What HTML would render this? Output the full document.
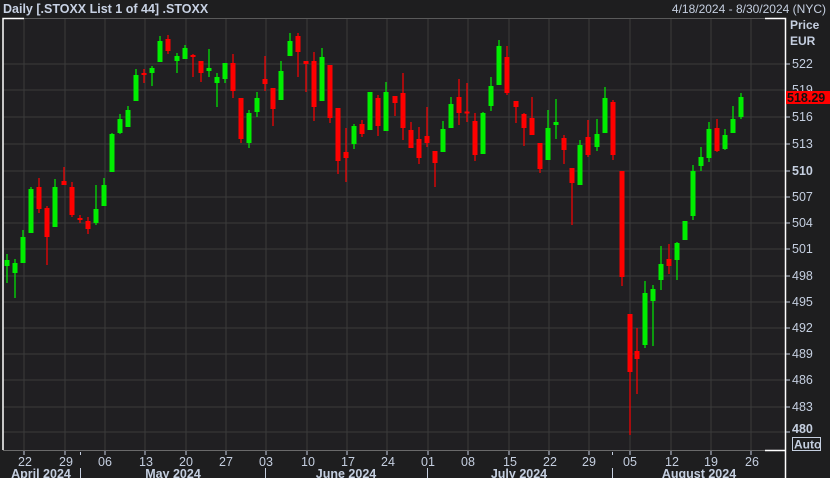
<!DOCTYPE html><html><head><style>
html,body{margin:0;padding:0;background:#1e1e1f;width:830px;height:478px;overflow:hidden}
svg{display:block}
text{font-family:"Liberation Sans",sans-serif;fill:#c5cfe0}
.g{fill:#00ee00;stroke:#00ee00}.r{fill:#ff0000;stroke:#ff0000}
line.g,line.r{stroke-width:1.2}
rect.g,rect.r{stroke-width:0}
.gr{stroke:#3b3b3b;stroke-width:1}
</style></head><body>
<svg width="830" height="478" viewBox="0 0 830 478">
<rect x="0" y="0" width="830" height="478" fill="#1e1e1f"/>
<rect x="3" y="19" width="782" height="431" fill="#201f22"/>
<g class="gr">
<line x1="3" x2="785" y1="64" y2="64"/><line x1="3" x2="785" y1="90" y2="90"/><line x1="3" x2="785" y1="117" y2="117"/><line x1="3" x2="785" y1="144" y2="144"/><line x1="3" x2="785" y1="171" y2="171"/><line x1="3" x2="785" y1="197" y2="197"/><line x1="3" x2="785" y1="223" y2="223"/><line x1="3" x2="785" y1="249" y2="249"/><line x1="3" x2="785" y1="276" y2="276"/><line x1="3" x2="785" y1="302" y2="302"/><line x1="3" x2="785" y1="328" y2="328"/><line x1="3" x2="785" y1="354" y2="354"/><line x1="3" x2="785" y1="380" y2="380"/><line x1="3" x2="785" y1="407" y2="407"/><line x1="3" x2="785" y1="432" y2="432"/>
<line y1="19" y2="450" x1="24" x2="24"/><line y1="19" y2="450" x1="65" x2="65"/><line y1="19" y2="450" x1="105" x2="105"/><line y1="19" y2="450" x1="145" x2="145"/><line y1="19" y2="450" x1="186" x2="186"/><line y1="19" y2="450" x1="226" x2="226"/><line y1="19" y2="450" x1="266" x2="266"/><line y1="19" y2="450" x1="307" x2="307"/><line y1="19" y2="450" x1="347" x2="347"/><line y1="19" y2="450" x1="387" x2="387"/><line y1="19" y2="450" x1="428" x2="428"/><line y1="19" y2="450" x1="468" x2="468"/><line y1="19" y2="450" x1="509" x2="509"/><line y1="19" y2="450" x1="549" x2="549"/><line y1="19" y2="450" x1="589" x2="589"/><line y1="19" y2="450" x1="630" x2="630"/><line y1="19" y2="450" x1="671" x2="671"/><line y1="19" y2="450" x1="711" x2="711"/><line y1="19" y2="450" x1="751" x2="751"/>
</g>
<polyline points="3,450 3,18.5 24,18.5" fill="none" stroke="#fff" stroke-width="1.5"/>
<line x1="24" x2="765" y1="18.5" y2="18.5" stroke="#5a5a5a"/>
<polyline points="765,18.5 785.5,18.5 785.5,478" fill="none" stroke="#fff" stroke-width="1.5"/>
<line x1="3" x2="765" y1="450.5" y2="450.5" stroke="#6a6a6a"/>
<line x1="765" x2="785" y1="450.5" y2="450.5" stroke="#fff" stroke-width="1.5"/>
<g>
<line class="g" x1="7" x2="7" y1="254" y2="283"/><rect class="g" x="4.5" y="260" width="5" height="6"/>
<line class="g" x1="15" x2="15" y1="259" y2="298"/><rect class="g" x="12.5" y="263" width="5" height="10"/>
<line class="g" x1="23" x2="23" y1="230" y2="263"/><rect class="g" x="20.5" y="237" width="5" height="26"/>
<line class="g" x1="31" x2="31" y1="187" y2="233"/><rect class="g" x="28.5" y="189" width="5" height="44"/>
<line class="r" x1="39" x2="39" y1="178" y2="213"/><rect class="r" x="36.5" y="187" width="5" height="22"/>
<line class="r" x1="47" x2="47" y1="206" y2="265"/><rect class="r" x="44.5" y="208" width="5" height="29"/>
<line class="g" x1="55" x2="55" y1="179" y2="227"/><rect class="g" x="52.5" y="187" width="5" height="40"/>
<line class="r" x1="64" x2="64" y1="167" y2="185"/><rect class="r" x="61.5" y="181" width="5" height="4"/>
<line class="r" x1="72" x2="72" y1="182" y2="217"/><rect class="r" x="69.5" y="187" width="5" height="28"/>
<line class="r" x1="80" x2="80" y1="215" y2="223"/><rect class="r" x="77.5" y="218" width="5" height="2"/>
<line class="r" x1="88" x2="88" y1="217" y2="234"/><rect class="r" x="85.5" y="221" width="5" height="8"/>
<line class="g" x1="96" x2="96" y1="185" y2="225"/><rect class="g" x="93.5" y="209" width="5" height="14"/>
<line class="g" x1="104" x2="104" y1="178" y2="206"/><rect class="g" x="101.5" y="185" width="5" height="21"/>
<line class="g" x1="112" x2="112" y1="133" y2="172"/><rect class="g" x="109.5" y="134" width="5" height="38"/>
<line class="g" x1="120" x2="120" y1="114" y2="134"/><rect class="g" x="117.5" y="119" width="5" height="14"/>
<line class="g" x1="128" x2="128" y1="106" y2="127"/><rect class="g" x="125.5" y="110" width="5" height="17"/>
<line class="g" x1="136" x2="136" y1="69" y2="101"/><rect class="g" x="133.5" y="75" width="5" height="26"/>
<line class="r" x1="144" x2="144" y1="69" y2="83"/><rect class="r" x="141.5" y="73" width="5" height="2"/>
<line class="g" x1="152" x2="152" y1="66" y2="86"/><rect class="g" x="149.5" y="68" width="5" height="5"/>
<line class="g" x1="160" x2="160" y1="36" y2="62"/><rect class="g" x="157.5" y="41" width="5" height="21"/>
<line class="r" x1="168" x2="168" y1="35" y2="54"/><rect class="r" x="165.5" y="39" width="5" height="12"/>
<line class="g" x1="177" x2="177" y1="53" y2="73"/><rect class="g" x="174.5" y="56" width="5" height="5"/>
<line class="g" x1="185" x2="185" y1="45" y2="59"/><rect class="g" x="182.5" y="48" width="5" height="11"/>
<line class="r" x1="193" x2="193" y1="54" y2="77"/><rect class="r" x="190.5" y="55" width="5" height="2"/>
<line class="r" x1="201" x2="201" y1="61" y2="82"/><rect class="r" x="198.5" y="61" width="5" height="12"/>
<line class="g" x1="209" x2="209" y1="49" y2="77"/><rect class="g" x="206.5" y="68" width="5" height="3"/>
<line class="g" x1="217" x2="217" y1="73" y2="107"/><rect class="g" x="214.5" y="77" width="5" height="6"/>
<line class="g" x1="225" x2="225" y1="63" y2="83"/><rect class="g" x="222.5" y="63" width="5" height="16"/>
<line class="r" x1="233" x2="233" y1="54" y2="98"/><rect class="r" x="230.5" y="63" width="5" height="28"/>
<line class="r" x1="241" x2="241" y1="98" y2="143"/><rect class="r" x="238.5" y="98" width="5" height="41"/>
<line class="g" x1="249" x2="249" y1="110" y2="148"/><rect class="g" x="246.5" y="113" width="5" height="30"/>
<line class="g" x1="257" x2="257" y1="92" y2="117"/><rect class="g" x="254.5" y="98" width="5" height="14"/>
<line class="r" x1="265" x2="265" y1="56" y2="91"/><rect class="r" x="262.5" y="79" width="5" height="5"/>
<line class="r" x1="273" x2="273" y1="88" y2="126"/><rect class="r" x="270.5" y="88" width="5" height="21"/>
<line class="g" x1="281" x2="281" y1="61" y2="100"/><rect class="g" x="278.5" y="71" width="5" height="29"/>
<line class="g" x1="290" x2="290" y1="33" y2="56"/><rect class="g" x="287.5" y="41" width="5" height="15"/>
<line class="r" x1="298" x2="298" y1="33" y2="77"/><rect class="r" x="295.5" y="36" width="5" height="16"/>
<line class="r" x1="306" x2="306" y1="61" y2="92"/><rect class="r" x="303.5" y="61" width="5" height="3"/>
<line class="r" x1="314" x2="314" y1="52" y2="121"/><rect class="r" x="311.5" y="61" width="5" height="46"/>
<line class="g" x1="322" x2="322" y1="48" y2="101"/><rect class="g" x="319.5" y="57" width="5" height="44"/>
<line class="r" x1="330" x2="330" y1="65" y2="123"/><rect class="r" x="327.5" y="65" width="5" height="53"/>
<line class="r" x1="338" x2="338" y1="108" y2="174"/><rect class="r" x="335.5" y="108" width="5" height="53"/>
<line class="r" x1="346" x2="346" y1="128" y2="182"/><rect class="r" x="343.5" y="152" width="5" height="6"/>
<line class="g" x1="354" x2="354" y1="124" y2="149"/><rect class="g" x="351.5" y="126" width="5" height="18"/>
<line class="r" x1="362" x2="362" y1="120" y2="137"/><rect class="r" x="359.5" y="124" width="5" height="10"/>
<line class="g" x1="370" x2="370" y1="92" y2="130"/><rect class="g" x="367.5" y="92" width="5" height="38"/>
<line class="r" x1="378" x2="378" y1="95" y2="136"/><rect class="r" x="375.5" y="98" width="5" height="28"/>
<line class="g" x1="386" x2="386" y1="82" y2="131"/><rect class="g" x="383.5" y="92" width="5" height="39"/>
<line class="r" x1="395" x2="395" y1="96" y2="116"/><rect class="r" x="392.5" y="96" width="5" height="7"/>
<line class="r" x1="403" x2="403" y1="73" y2="140"/><rect class="r" x="400.5" y="93" width="5" height="35"/>
<line class="r" x1="411" x2="411" y1="122" y2="148"/><rect class="r" x="408.5" y="130" width="5" height="18"/>
<line class="r" x1="419" x2="419" y1="127" y2="164"/><rect class="r" x="416.5" y="139" width="5" height="19"/>
<line class="r" x1="427" x2="427" y1="107" y2="147"/><rect class="r" x="424.5" y="136" width="5" height="7"/>
<line class="r" x1="435" x2="435" y1="151" y2="187"/><rect class="r" x="432.5" y="151" width="5" height="12"/>
<line class="g" x1="443" x2="443" y1="121" y2="152"/><rect class="g" x="440.5" y="129" width="5" height="23"/>
<line class="g" x1="451" x2="451" y1="97" y2="128"/><rect class="g" x="448.5" y="104" width="5" height="24"/>
<line class="r" x1="459" x2="459" y1="79" y2="125"/><rect class="r" x="456.5" y="97" width="5" height="16"/>
<line class="r" x1="467" x2="467" y1="83" y2="122"/><rect class="r" x="464.5" y="111.5" width="5" height="2"/>
<line class="r" x1="475" x2="475" y1="113" y2="161"/><rect class="r" x="472.5" y="121" width="5" height="34"/>
<line class="g" x1="483" x2="483" y1="112" y2="154"/><rect class="g" x="480.5" y="113" width="5" height="41"/>
<line class="g" x1="491" x2="491" y1="77" y2="111"/><rect class="g" x="488.5" y="86" width="5" height="20"/>
<line class="g" x1="499" x2="499" y1="40" y2="85"/><rect class="g" x="496.5" y="46" width="5" height="39"/>
<line class="r" x1="507" x2="507" y1="46" y2="95"/><rect class="r" x="504.5" y="57" width="5" height="36"/>
<line class="r" x1="516" x2="516" y1="101" y2="123"/><rect class="r" x="513.5" y="101" width="5" height="6"/>
<line class="r" x1="524" x2="524" y1="113" y2="146"/><rect class="r" x="521.5" y="114" width="5" height="14"/>
<line class="r" x1="532" x2="532" y1="97" y2="135"/><rect class="r" x="529.5" y="118" width="5" height="17"/>
<line class="r" x1="540" x2="540" y1="143" y2="173"/><rect class="r" x="537.5" y="143" width="5" height="26"/>
<line class="g" x1="548" x2="548" y1="110" y2="160"/><rect class="g" x="545.5" y="128" width="5" height="32"/>
<line class="g" x1="556" x2="556" y1="99" y2="139"/><rect class="g" x="553.5" y="122" width="5" height="3"/>
<line class="r" x1="564" x2="564" y1="135" y2="164"/><rect class="r" x="561.5" y="138" width="5" height="12"/>
<line class="r" x1="572" x2="572" y1="168" y2="225"/><rect class="r" x="569.5" y="168" width="5" height="15"/>
<line class="g" x1="580" x2="580" y1="140" y2="185"/><rect class="g" x="577.5" y="145" width="5" height="40"/>
<line class="r" x1="588" x2="588" y1="120" y2="157"/><rect class="r" x="585.5" y="137" width="5" height="18"/>
<line class="g" x1="597" x2="597" y1="119" y2="151"/><rect class="g" x="594.5" y="134" width="5" height="13"/>
<line class="g" x1="605" x2="605" y1="87" y2="133"/><rect class="g" x="602.5" y="98" width="5" height="35"/>
<line class="r" x1="613" x2="613" y1="100" y2="160"/><rect class="r" x="610.5" y="102" width="5" height="53"/>
<line class="r" x1="622" x2="622" y1="171" y2="286"/><rect class="r" x="619.5" y="171" width="5" height="106"/>
<line class="r" x1="630" x2="630" y1="314" y2="435"/><rect class="r" x="627.5" y="314" width="5" height="58"/>
<line class="r" x1="637" x2="637" y1="328" y2="394"/><rect class="r" x="634.5" y="351" width="5" height="8"/>
<line class="g" x1="645" x2="645" y1="281" y2="348"/><rect class="g" x="642.5" y="293" width="5" height="52"/>
<line class="g" x1="653" x2="653" y1="285" y2="346"/><rect class="g" x="650.5" y="289" width="5" height="12"/>
<line class="g" x1="661" x2="661" y1="246" y2="290"/><rect class="g" x="658.5" y="264" width="5" height="16"/>
<line class="r" x1="669" x2="669" y1="244" y2="274"/><rect class="r" x="666.5" y="259" width="5" height="7"/>
<line class="g" x1="677" x2="677" y1="242" y2="280"/><rect class="g" x="674.5" y="243" width="5" height="17"/>
<line class="g" x1="685" x2="685" y1="221" y2="240"/><rect class="g" x="682.5" y="221" width="5" height="19"/>
<line class="g" x1="693" x2="693" y1="165" y2="220"/><rect class="g" x="690.5" y="171" width="5" height="45"/>
<line class="g" x1="701" x2="701" y1="147" y2="171"/><rect class="g" x="698.5" y="157" width="5" height="9"/>
<line class="g" x1="709" x2="709" y1="122" y2="162"/><rect class="g" x="706.5" y="129" width="5" height="29"/>
<line class="r" x1="717" x2="717" y1="119" y2="152"/><rect class="r" x="714.5" y="128" width="5" height="23"/>
<line class="g" x1="725" x2="725" y1="129" y2="150"/><rect class="g" x="722.5" y="135" width="5" height="14"/>
<line class="g" x1="733" x2="733" y1="106" y2="133"/><rect class="g" x="730.5" y="119" width="5" height="14"/>
<line class="g" x1="741" x2="741" y1="93" y2="119"/><rect class="g" x="738.5" y="97" width="5" height="20"/>
</g>
<text x="3" y="13" font-size="12.5" font-weight="bold" style="fill:#c8d2e4">Daily [.STOXX List 1 of 44] .STOXX</text>
<text x="826" y="13" font-size="12" text-anchor="end">4/18/2024 - 8/30/2024 (NYC)</text>
<text x="790" y="29" font-size="12" font-weight="bold">Price</text>
<text x="790" y="45" font-size="12" font-weight="bold">EUR</text>
<g stroke="#c5cfe0"><line x1="786" x2="790" y1="64" y2="64"/><line x1="786" x2="790" y1="117" y2="117"/><line x1="786" x2="790" y1="144" y2="144"/><line x1="786" x2="790" y1="171" y2="171"/><line x1="786" x2="790" y1="197" y2="197"/><line x1="786" x2="790" y1="223" y2="223"/><line x1="786" x2="790" y1="249" y2="249"/><line x1="786" x2="790" y1="276" y2="276"/><line x1="786" x2="790" y1="302" y2="302"/><line x1="786" x2="790" y1="328" y2="328"/><line x1="786" x2="790" y1="354" y2="354"/><line x1="786" x2="790" y1="380" y2="380"/><line x1="786" x2="790" y1="407" y2="407"/><line x1="786" x2="790" y1="432" y2="432"/></g>
<g font-size="12.5">
<text x="792" y="68">522</text><text x="792" y="94">519</text><text x="792" y="121">516</text><text x="792" y="148">513</text>
<text x="792" y="175" font-weight="bold">510</text><text x="792" y="201">507</text><text x="792" y="227">504</text><text x="792" y="253">501</text>
<text x="792" y="280">498</text><text x="792" y="306">495</text><text x="792" y="332">492</text><text x="792" y="358">489</text>
<text x="792" y="384">486</text><text x="792" y="411">483</text><text x="792" y="433" font-weight="bold">480</text>
</g>
<rect x="786" y="91" width="44" height="13" fill="#ff0000"/>
<text x="787" y="102" font-size="12.5" font-weight="bold" style="fill:#111">518.29</text>
<rect x="792.5" y="437.5" width="28" height="13" fill="#1e1e1f" stroke="#c5cfe0"/>
<text x="794" y="448.5" font-size="12" font-weight="bold">Auto</text>
<g stroke="#c5cfe0"><line x1="24" x2="24" y1="451" y2="455"/><line x1="65" x2="65" y1="451" y2="455"/><line x1="105" x2="105" y1="451" y2="455"/><line x1="145" x2="145" y1="451" y2="455"/><line x1="186" x2="186" y1="451" y2="455"/><line x1="226" x2="226" y1="451" y2="455"/><line x1="266" x2="266" y1="451" y2="455"/><line x1="307" x2="307" y1="451" y2="455"/><line x1="347" x2="347" y1="451" y2="455"/><line x1="387" x2="387" y1="451" y2="455"/><line x1="428" x2="428" y1="451" y2="455"/><line x1="468" x2="468" y1="451" y2="455"/><line x1="509" x2="509" y1="451" y2="455"/><line x1="549" x2="549" y1="451" y2="455"/><line x1="589" x2="589" y1="451" y2="455"/><line x1="630" x2="630" y1="451" y2="455"/><line x1="671" x2="671" y1="451" y2="455"/><line x1="711" x2="711" y1="451" y2="455"/><line x1="751" x2="751" y1="451" y2="455"/>
<line x1="80.5" x2="80.5" y1="452" y2="455"/><line x1="80.5" x2="80.5" y1="468" y2="478"/><line x1="265.5" x2="265.5" y1="468" y2="478"/><line x1="427.5" x2="427.5" y1="468" y2="478"/><line x1="612.5" x2="612.5" y1="452" y2="455"/><line x1="612.5" x2="612.5" y1="468" y2="478"/></g>
<g font-size="12.5" text-anchor="middle">
<text x="25" y="466">22</text><text x="66" y="466">29</text><text x="105" y="466">06</text><text x="146" y="466">13</text><text x="186" y="466">20</text><text x="226" y="466">27</text><text x="266" y="466">03</text><text x="308" y="466">10</text><text x="348" y="466">17</text><text x="388" y="466">24</text><text x="428" y="466">01</text><text x="468" y="466">08</text><text x="510" y="466">15</text><text x="550" y="466">22</text><text x="589" y="466">29</text><text x="630" y="466">05</text><text x="672" y="466">12</text><text x="711" y="466">19</text><text x="752" y="466">26</text>
</g>
<g font-size="12.5" font-weight="bold" text-anchor="middle">
<text x="41" y="478">April 2024</text><text x="173" y="478">May 2024</text><text x="346" y="478">June 2024</text><text x="519" y="478">July 2024</text><text x="699" y="478">August 2024</text>
</g>
</svg>
</body></html>
